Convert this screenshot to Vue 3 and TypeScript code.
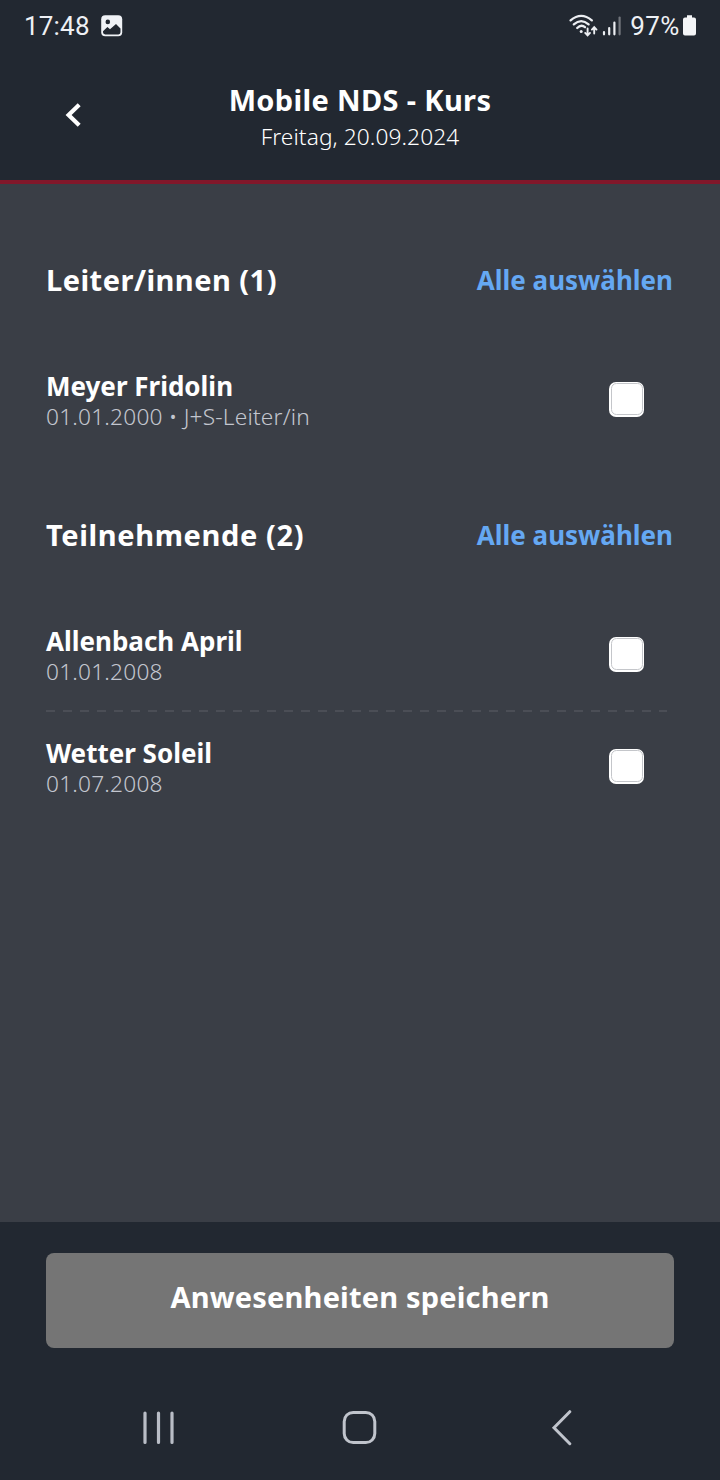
<script setup lang="ts">
import { ref } from 'vue'

interface Person {
  name: string
  info: string
  checked: boolean
}
interface Group {
  title: string
  cls: string
  people: Person[]
}

const groups = ref<Group[]>([
  {
    title: 'Leiter/innen (1)',
    cls: 'leaders',
    people: [{ name: 'Meyer Fridolin', info: '01.01.2000 • J+S-Leiter/in', checked: false }],
  },
  {
    title: 'Teilnehmende (2)',
    cls: 'members',
    people: [
      { name: 'Allenbach April', info: '01.01.2008', checked: false },
      { name: 'Wetter Soleil', info: '01.07.2008', checked: false },
    ],
  },
])

function selectAll(group: Group): void {
  group.people.forEach((p) => (p.checked = true))
}
</script>

<template>
  <div class="screen">
    <div class="status">
      <span class="clock">17:48</span>
      <svg class="photo" width="22" height="22" viewBox="0 0 22 22">
        <rect x="0.2" y="0.2" width="21" height="21" rx="4" fill="#f0f2f6" />
        <circle cx="6.8" cy="6.9" r="2.3" fill="#222831" />
        <path d="M2 16.2L6.4 12.1L9 14.3L15 9L19.5 13.4V17.3Q19.5 19.4 17.4 19.4H4.2Q2 19.4 2 17.3Z" fill="#222831" />
      </svg>
      <div class="spacer"></div>
      <svg class="wifi" width="30" height="24" viewBox="0 0 30 24" fill="none" stroke="#eceef2" stroke-linecap="round">
        <path d="M1.6 6.4Q12.2 -2.6 22.8 6.4" stroke-width="2.3" />
        <path d="M4.8 10.4Q12.2 3.8 19.6 10.4" stroke-width="2.3" />
        <path d="M8.2 14Q12.2 10 16 13.2" stroke-width="2.3" />
        <circle cx="12.2" cy="17.4" r="1.5" fill="#eceef2" stroke="none" />
        <path d="M18.6 14.5V21M16.2 18.9L18.6 21.4L21 18.9" stroke-width="1.9" />
        <path d="M25.2 19.6V13.4M22.9 15.6L25.2 13.2L27.5 15.6" stroke-width="1.9" />
      </svg>
      <svg class="signal" width="20" height="20" viewBox="0 0 20 20" stroke-width="2.2" stroke-linecap="round">
        <path d="M2 16V18.3M7.2 12V18.3M12.4 6.5V18.3" stroke="#eceef2" />
        <path d="M17.6 1.5V18.3" stroke="#71757c" />
      </svg>
      <span class="percent">97%</span>
      <svg class="battery" width="13" height="22" viewBox="0 0 13 22">
        <path d="M4 0.3H9V2.4H11Q13 2.4 13 4.4V18.6Q13 20.6 11 20.6H2Q0 20.6 0 18.6V4.4Q0 2.4 2 2.4H4Z" fill="#f4f5f7" />
      </svg>
    </div>

    <header class="header">
      <svg class="back" width="18" height="26" viewBox="0 0 18 26" fill="none" stroke="#fff" stroke-width="4.2">
        <path d="M15.2 2.8L4.6 13L15.2 23.2" />
      </svg>
      <div class="titles">
        <h1>Mobile NDS - Kurs</h1>
        <p>Freitag, 20.09.2024</p>
      </div>
    </header>

    <main class="content">
      <section v-for="g in groups" :key="g.title" class="group" :class="g.cls">
        <div class="group-head">
          <h2>{{ g.title }}</h2>
          <a class="all" @click="selectAll(g)">Alle auswählen</a>
        </div>
        <div v-for="p in g.people" :key="p.name" class="row">
          <div class="person">
            <div class="name">{{ p.name }}</div>
            <div class="info">{{ p.info }}</div>
          </div>
          <label class="check">
            <input v-model="p.checked" type="checkbox" />
            <span class="box"></span>
          </label>
        </div>
      </section>
    </main>

    <footer class="footer">
      <button class="save">Anwesenheiten speichern</button>
    </footer>

    <nav class="nav">
      <svg width="34" height="36" viewBox="0 0 34 36" stroke="#b9bdc6" stroke-width="3.2" stroke-linecap="round">
        <path d="M3 3V32.4M16.5 3V32.4M30 3V32.4" />
      </svg>
      <svg width="36" height="36" viewBox="0 0 36 36" fill="none" stroke="#c0c4cc" stroke-width="3">
        <rect x="3.2" y="2.4" width="30.6" height="30.2" rx="9" />
      </svg>
      <svg width="22" height="36" viewBox="0 0 22 36" fill="none" stroke="#c0c4cc" stroke-width="3" stroke-linecap="round">
        <path d="M19.8 1.7L4 17.8L19.8 33.7" />
      </svg>
    </nav>
  </div>
</template>

<style>
body {
  margin: 0;
  background: #222831;
}
</style>

<style scoped>
.screen {
  width: 720px;
  height: 1480px;
  display: flex;
  flex-direction: column;
  overflow: hidden;
  background: #222831;
  color: #fff;
  font-family: 'Noto Sans', 'Open Sans', sans-serif;
}
.status {
  height: 50px;
  display: flex;
  align-items: center;
  box-sizing: border-box;
  padding: 2px 24px 0 24px;
  font-family: Roboto, sans-serif;
  color: #eef0f4;
}
.clock {
  width: 77px;
  font-size: 26px;
  letter-spacing: 0.2px;
}
.spacer {
  flex: 1;
}
.signal {
  margin-left: 3.5px;
}
.percent {
  margin-left: 8.2px;
  margin-right: 3.2px;
  font-size: 26px;
  line-height: 30px;
  letter-spacing: 0.4px;
}
.header {
  height: 130px;
  flex: none;
  display: grid;
  grid-template-columns: 120px 1fr 120px;
  border-bottom: 4px solid #81172a;
}
.back {
  margin: 52px 0 0 64px;
}
.titles {
  padding-top: 32px;
  text-align: center;
}
h1,
h2,
p {
  margin: 0;
}
h1 {
  font-size: 29px;
  line-height: 36px;
  font-weight: 700;
  letter-spacing: 0.35px;
}
p {
  margin-top: 4px;
  font-size: 22.7px;
  line-height: 30px;
  font-weight: 300;
  letter-spacing: 0.08px;
}
.content {
  flex: 1;
  padding: 78px 47px 0 46px;
  background: #3a3e46;
}
.group-head {
  display: flex;
  justify-content: space-between;
  height: 81px;
}
h2 {
  font-size: 29px;
  line-height: 36px;
  font-weight: 700;
  letter-spacing: 0.47px;
}
.members h2 {
  letter-spacing: 0.62px;
}
.all {
  font-size: 26px;
  line-height: 37.6px;
  font-weight: 700;
  color: #65a8f3;
}
.row {
  height: 112px;
  display: flex;
  justify-content: space-between;
  align-items: center;
  padding-right: 29px;
}
.row + .row {
  background: repeating-linear-gradient(90deg, #4b4e56 0 9px, transparent 9px 17.02px) 0 0 / 621px 2px no-repeat;
}
.members {
  margin-top: 62px;
}
.person {
  padding-top: 4px;
}
.leaders .person {
  padding-top: 3px;
}
.name {
  font-size: 26px;
  line-height: 32px;
  font-weight: 700;
}
.info {
  font-size: 22.7px;
  line-height: 30px;
  font-weight: 300;
  letter-spacing: 0.2px;
  color: #c3c6cf;
}
.check input {
  display: none;
}
.box {
  display: block;
  width: 35px;
  height: 35px;
  box-sizing: border-box;
  padding: 1.5px;
  background: #fff;
  border-radius: 7px;
}
.box::before {
  content: '';
  display: block;
  height: 100%;
  box-sizing: border-box;
  border: 1px solid #c4c6ca;
  border-radius: 5.5px;
}
.footer {
  height: 153px;
  flex: none;
  box-sizing: border-box;
  padding: 31px 46px 0;
}
.save {
  display: block;
  width: 628px;
  height: 95px;
  padding: 0 0 8px;
  border: 0;
  border-radius: 8px;
  background: #757575;
  color: #fff;
  font: 700 29px/36px 'Noto Sans', 'Open Sans', sans-serif;
  letter-spacing: 0.18px;
}
.nav {
  height: 105px;
  flex: none;
  display: grid;
  grid-template-columns: 318px 82px 322px;
  align-items: center;
  justify-items: center;
}
</style>
